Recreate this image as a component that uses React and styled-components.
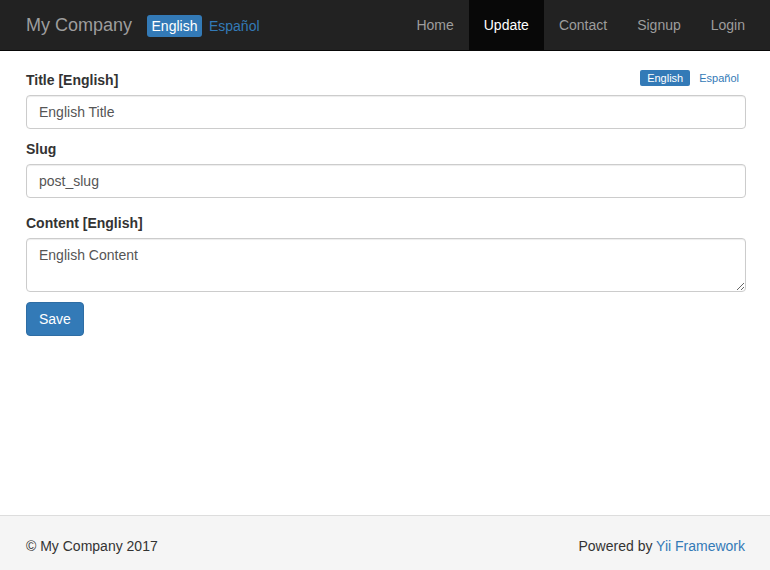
import React from "react"
import styled, {createGlobalStyle} from "styled-components"

const GlobalStyle = createGlobalStyle`
  html, body {
    margin: 0;
    padding: 0;
    height: 100%;
  }
  body {
    font-family: "Liberation Sans", Arial, sans-serif;
    font-size: 14px;
    line-height: 20px;
    color: #333;
    background: #fff;
  }
  * {
    box-sizing: border-box;
  }
`

const Page = styled.div`
  min-height: 100vh;
  display: flex;
  flex-direction: column;
`

const Navbar = styled.nav`
  height: 51px;
  background: #222;
  border-bottom: 1px solid #080808;
`

const NavInner = styled.div`
  width: 750px;
  margin: 0 auto;
  padding: 0 15px;
  display: flex;
  align-items: center;
  height: 50px;
`

const Brand = styled.a`
  font-size: 18px;
  line-height: 20px;
  color: #9d9d9d;
  padding: 15px;
  margin-left: -14px;
  text-decoration: none;
`

const LangSwitch = styled.div`
  display: flex;
  align-items: center;
  gap: ${p => p.$gap}px;
  margin-right: ${p => p.$mr || 0}px;
  margin-top: ${p => p.$mt || 0}px;
`

const LangItem = styled.a`
  font-size: ${p => p.$size}px;
  line-height: ${p => p.$lh}px;
  padding: 0 ${p => p.$pad}px;
  border-radius: ${p => p.$radius || 0}px;
  text-decoration: none;
  color: ${p => (p.$active ? "#fff" : "#337ab7")};
  background: ${p => (p.$active ? "#337ab7" : "transparent")};
`

const NavRight = styled.ul`
  margin: 0 -15px 0 auto;
  padding: 0;
  list-style: none;
  display: flex;
  height: 50px;
`

const NavLink = styled.a`
  display: block;
  padding: 15px;
  line-height: 20px;
  font-size: 14px;
  text-decoration: none;
  color: ${p => (p.$active ? "#fff" : "#9d9d9d")};
  background: ${p => (p.$active ? "#080808" : "transparent")};
`

const Main = styled.main`
  flex: 1;
  width: 750px;
  margin: 0 auto;
  padding: 19px 14px 0 16px;
`

const FormGroup = styled.div`
  margin-bottom: ${p => p.$mb}px;
`

const LabelRow = styled.div`
  display: flex;
  align-items: flex-start;
  justify-content: space-between;
  margin-bottom: 5px;
`

const Label = styled.label`
  font-weight: bold;
  font-size: 14px;
  line-height: 20px;
`

const Input = styled.input`
  display: block;
  width: 100%;
  height: 34px;
  padding: 6px 12px;
  font-family: inherit;
  font-size: 14px;
  line-height: 20px;
  color: #555;
  background: #fff;
  border: 1px solid #ccc;
  border-radius: 4px;
  box-shadow: inset 0 1px 1px rgba(0, 0, 0, 0.075);
`

const TextArea = styled.textarea`
  display: block;
  width: 100%;
  height: 54px;
  padding: 6px 12px;
  font-family: inherit;
  font-size: 14px;
  line-height: 20px;
  color: #555;
  background: #fff;
  border: 1px solid #ccc;
  border-radius: 4px;
  box-shadow: inset 0 1px 1px rgba(0, 0, 0, 0.075);
  resize: vertical;
`

const SaveButton = styled.button`
  font-family: inherit;
  font-size: 14px;
  line-height: 20px;
  padding: 6px 12px;
  color: #fff;
  background: #337ab7;
  border: 1px solid #2e6da4;
  border-radius: 4px;
  cursor: pointer;
`

const Footer = styled.footer`
  height: 55px;
  background: #f5f5f5;
  border-top: 1px solid #ddd;
`

const FooterInner = styled.div`
  width: 750px;
  margin: 0 auto;
  padding: 20px 15px 0 16px;
  display: flex;
  justify-content: space-between;
`

const FooterLink = styled.a`
  color: #337ab7;
  text-decoration: none;
`

const App = () => {
  const links = ["Home", "Update", "Contact", "Signup", "Login"]

  return (
    <Page>
      <GlobalStyle />
      <Navbar>
        <NavInner>
          <Brand href="#">My Company</Brand>
          <LangSwitch $gap={7} $mt={2}>
            <LangItem $active $size={14} $lh={22} $pad={4.5} $radius={3}>English</LangItem>
            <LangItem $size={14} $lh={22} $pad={0}>Español</LangItem>
          </LangSwitch>
          <NavRight>
            {links.map(link => (
              <li key={link}>
                <NavLink href="#" $active={link === "Update"}>{link}</NavLink>
              </li>
            ))}
          </NavRight>
        </NavInner>
      </Navbar>

      <Main>
        <FormGroup $mb={10}>
          <LabelRow>
            <Label>Title [English]</Label>
            <LangSwitch $gap={9} $mr={7}>
              <LangItem $active $size={11} $lh={16} $pad={7} $radius={2}>English</LangItem>
              <LangItem $size={11} $lh={16} $pad={0}>Español</LangItem>
            </LangSwitch>
          </LabelRow>
          <Input defaultValue="English Title" />
        </FormGroup>
        <FormGroup $mb={15}>
          <LabelRow>
            <Label>Slug</Label>
          </LabelRow>
          <Input defaultValue="post_slug" />
        </FormGroup>
        <FormGroup $mb={10}>
          <LabelRow>
            <Label>Content [English]</Label>
          </LabelRow>
          <TextArea rows={2} defaultValue="English Content" />
        </FormGroup>
        <SaveButton>Save</SaveButton>
      </Main>

      <Footer>
        <FooterInner>
          <span>© My Company 2017</span>
          <span>Powered by <FooterLink href="#">Yii Framework</FooterLink></span>
        </FooterInner>
      </Footer>
    </Page>
  )
}

export default App
